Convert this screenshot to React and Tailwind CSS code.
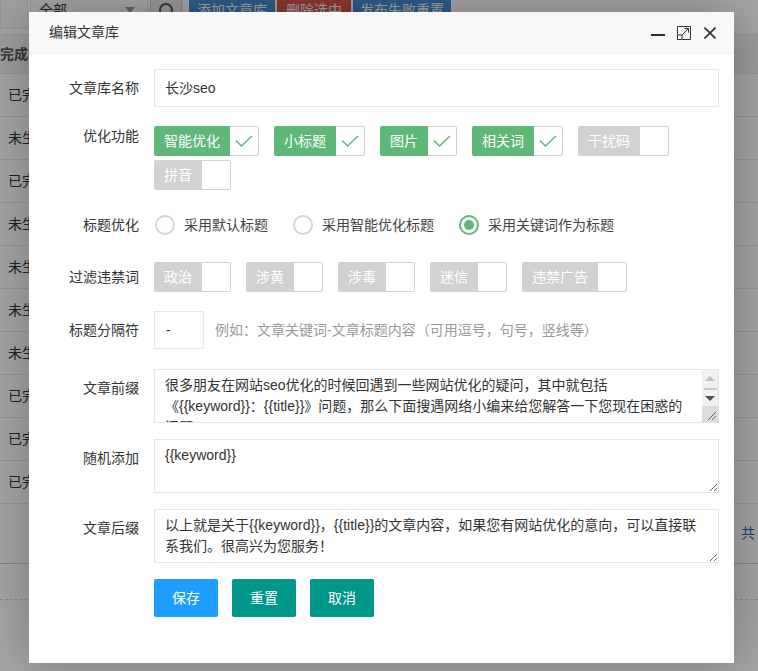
import React from "react";

const font = "font-['Liberation_Sans','Noto_Sans_CJK_SC',sans-serif]";

// checkbox in layui "default" skin
function SkinCheck({ label, checked }) {
  return (
    <div className="flex h-[30px]">
      <span
        className={`h-full rounded-l-[2px] px-[10px] text-[14px] leading-[30px] text-white ${
          checked ? "bg-[#5FB878]" : "bg-[#d2d2d2]"
        }`}
      >
        {label}
      </span>
      <span className="flex h-full w-[29px] items-center justify-center rounded-r-[2px] border border-l-0 border-[#d2d2d2] bg-white">
        {checked && (
          <svg width="18" height="12" viewBox="0 0 18 12">
            <polyline
              points="1,5.5 6.5,11 17,1"
              fill="none"
              stroke="#5FB878"
              strokeWidth="1.4"
            />
          </svg>
        )}
      </span>
    </div>
  );
}

function Radio({ label, checked }) {
  return (
    <div className="mr-[24px] flex items-center">
      <span
        className={`ml-px flex h-[20px] w-[20px] items-center justify-center rounded-full border-2 ${
          checked ? "border-[#5FB878]" : "border-[#d5d5d5]"
        }`}
      >
        {checked && <span className="h-[10px] w-[10px] rounded-full bg-[#5FB878]" />}
      </span>
      <span className="ml-[9px] text-[14px] text-[#444]">{label}</span>
    </div>
  );
}

function Row({ label, children, className = "", top = false }) {
  return (
    <div className={`flex ${className}`}>
      <div
        className={`w-[125px] shrink-0 pr-[15px] text-right text-[14px] text-[#333] ${
          top ? "pt-[9px] leading-[20px]" : "flex items-center justify-end"
        }`}
      >
        {label}
      </div>
      <div className="w-[565px]">{children}</div>
    </div>
  );
}

const rows = ["已完成", "未生成", "已完成", "未生成", "未生成", "未生成", "未生成", "已完成", "已完成", "已完成"];

export default function App() {
  const prefix =
    "很多朋友在网站seo优化的时候回遇到一些网站优化的疑问，其中就包括\n《{{keyword}}：{{title}}》问题，那么下面搜遇网络小编来给您解答一下您现在困惑的\n问题。";
  const suffix =
    "以上就是关于{{keyword}}，{{title}}的文章内容，如果您有网站优化的意向，可以直接联系我们。很高兴为您服务！";

  return (
    <div className={`relative h-[671px] w-full overflow-hidden bg-white ${font}`}>
      {/* page behind the dialog */}
      <div className="-mt-[9px] flex h-[38px] items-stretch text-[14px]">
        <div className="w-[28px] border border-[#e6e6e6] bg-[#f6f6f6]" />
        <div className="ml-[2px] flex w-[118px] items-center justify-between border border-[#e6e6e6] bg-white px-[8px] text-[#333]">
          <span>全部</span>
          <span className="mr-[4px] border-x-[5px] border-t-[6px] border-x-transparent border-t-[#999]" />
        </div>
        <div className="ml-[2px] flex w-[32px] items-center justify-center border border-[#d6d6d6] bg-[#eee]">
          <span className="h-[14px] w-[14px] rounded-full border-2 border-[#555]" />
        </div>
        <div className="ml-[7px] flex w-[86px] items-center justify-center bg-[#4690d6] text-white">添加文章库</div>
        <div className="ml-[2px] flex w-[74px] items-center justify-center bg-[#d9584a] text-white">删除选中</div>
        <div className="ml-[2px] flex w-[98px] items-center justify-center bg-[#4690d6] text-white">发布失败重置</div>
      </div>
      <div className="mt-[5px] border-t border-[#e6e6e6]">
        <div className="flex h-[38px] items-center bg-[#f2f2f2] text-[14px] font-bold text-[#555]">完成状态</div>
        {rows.map((r, i) => (
          <div key={i} className="flex h-[43px] items-center border-t border-[#e6e6e6] pl-[8px] text-[14px] text-[#333]">
            {r}
          </div>
        ))}
        <div className="border-t border-[#e6e6e6]" />
      </div>
      <div className="flex h-[60px] items-center justify-end border-b border-[#ccc] pr-[3px] text-[14px] text-[#1e6fb8]">
        <span>共</span>
      </div>
      <div className="mt-[35px] border-t border-dashed border-[#d8d8d8]" />

      {/* shade */}
      <div className="absolute inset-0 bg-black/35" />

      {/* dialog */}
      <div className="absolute left-[29px] top-[12px] h-[651px] w-[705px] bg-white shadow-[1px_1px_50px_rgba(0,0,0,0.3)]">
        <div className="flex h-[42px] items-center border-b border-[#eee] bg-[#F8F8F8] pl-[20px] pr-[18px]">
          <span className="text-[14px] text-[#333]">编辑文章库</span>
          <div className="ml-auto flex items-center">
            <svg width="14" height="14" viewBox="0 0 14 14" className="mt-[2px]">
              <rect x="0" y="7" width="14" height="2" fill="#2e2e2e" />
            </svg>
            <svg width="14" height="14" viewBox="0 0 14 14" className="ml-[12px]">
              <path d="M0.5 8.5 V0.5 H13.5 V13.5 H5.5" fill="none" stroke="#333" strokeWidth="1" />
              <rect x="0.5" y="9" width="4.5" height="4.5" fill="none" stroke="#333" strokeWidth="1" />
              <path d="M5 9 L11.5 2.5 M7.5 2.5 H11.5 V6.5" fill="none" stroke="#333" strokeWidth="1" />
            </svg>
            <svg width="12" height="12" viewBox="0 0 12 12" className="ml-[13px]">
              <path d="M0.5 0.5 L11.5 11.5 M11.5 0.5 L0.5 11.5" stroke="#2e2e2e" strokeWidth="1.6" />
            </svg>
          </div>
        </div>

        <div className="pt-[15px]">
          <Row label="文章库名称">
            <div className="flex h-[38px] items-center border border-[#e6e6e6] pl-[10px] text-[14px] text-[#333]">
              长沙seo
            </div>
          </Row>

          <Row label="优化功能" className="mt-[19px] items-start">
            <div className="flex flex-wrap gap-x-[15px] gap-y-[4px]">
              <SkinCheck label="智能优化" checked />
              <SkinCheck label="小标题" checked />
              <SkinCheck label="图片" checked />
              <SkinCheck label="相关词" checked />
              <SkinCheck label="干扰码" />
              <SkinCheck label="拼音" />
            </div>
          </Row>

          <Row label="标题优化" className="mt-[20px] h-[30px]">
            <div className="flex h-[30px] items-center">
              <Radio label="采用默认标题" />
              <Radio label="采用智能优化标题" />
              <Radio label="采用关键词作为标题" checked />
            </div>
          </Row>

          <Row label="过滤违禁词" className="mt-[22px] h-[30px]">
            <div className="flex gap-x-[15px]">
              <SkinCheck label="政治" />
              <SkinCheck label="涉黄" />
              <SkinCheck label="涉毒" />
              <SkinCheck label="迷信" />
              <SkinCheck label="违禁广告" />
            </div>
          </Row>

          <Row label="标题分隔符" className="mt-[19px] h-[38px]">
            <div className="flex h-[38px] items-center">
              <div className="flex h-[38px] w-[50px] items-center border border-[#e6e6e6] pl-[11px] text-[14px] text-[#333]">-</div>
              <span className="ml-[11px] text-[14px] text-[#999]">
                例如：文章关键词-文章标题内容（可用逗号，句号，竖线等）
              </span>
            </div>
          </Row>

          <Row label="文章前缀" className="mt-[20px]" top>
            <div className="relative">
              <textarea
                readOnly
                value={prefix}
                className="block h-[54px] w-full resize-none overflow-hidden border border-[#e6e6e6] py-[5px] pl-[10px] pr-[25px] text-[14px] leading-[21px] text-[#333] outline-none"
              />
              {/* classic scrollbar drawn over the textarea */}
              <div className="absolute bottom-px right-px top-px flex w-[16px] flex-col bg-[#f1f1f1]">
                <div className="flex h-[16px] items-center justify-center">
                  <span className="border-x-[5px] border-b-[5px] border-x-transparent border-b-[#c1c1c1]" />
                </div>
                <div className="mx-auto mt-[2px] h-[2px] w-[13px] bg-[#c8c8c8]" />
                <div className="flex h-[16px] items-center justify-center">
                  <span className="border-x-[5px] border-t-[5px] border-x-transparent border-t-[#505050]" />
                </div>
                <div className="mt-auto flex h-[16px] items-end justify-end bg-[#dcdcdc] p-[2px]">
                  <svg width="9" height="9" viewBox="0 0 9 9">
                    <path d="M1 9 L9 1 M5 9 L9 5" stroke="#666" strokeWidth="1" />
                  </svg>
                </div>
              </div>
            </div>
          </Row>

          <Row label="随机添加" className="mt-[16px]" top>
            <textarea
              readOnly
              value="{{keyword}}"
              className="block h-[54px] w-full border border-[#e6e6e6] px-[10px] py-[5px] text-[14px] leading-[21px] text-[#333] outline-none"
            />
          </Row>

          <Row label="文章后缀" className="mt-[16px]" top>
            <textarea
              readOnly
              value={suffix}
              className="block h-[54px] w-full border border-[#e6e6e6] px-[10px] py-[5px] text-[14px] leading-[21px] text-[#333] outline-none"
            />
          </Row>

          <Row label="" className="mt-[16px]">
            <div className="flex gap-x-[14px]">
              <button className="h-[38px] w-[64px] rounded-[2px] bg-[#1E9FFF] text-[14px] text-white">保存</button>
              <button className="h-[38px] w-[64px] rounded-[2px] bg-[#009688] text-[14px] text-white">重置</button>
              <button className="h-[38px] w-[64px] rounded-[2px] bg-[#009688] text-[14px] text-white">取消</button>
            </div>
          </Row>
        </div>
      </div>
    </div>
  );
}
